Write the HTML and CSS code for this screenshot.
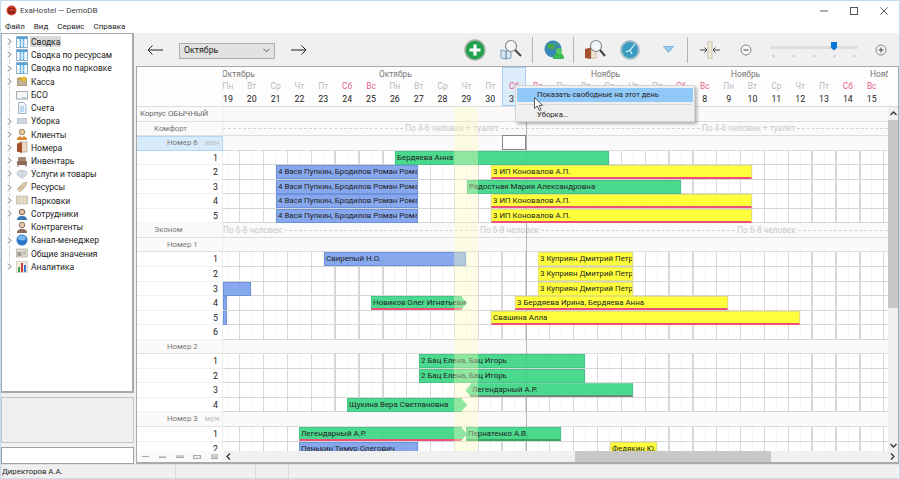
FILE: index.html
```html
<!DOCTYPE html>
<html lang="ru">
<head>
<meta charset="utf-8">
<title>ExaHostel — DemoDB</title>
<link rel="stylesheet" href="styles.css">
</head>
<body>
<svg class="defs" width="0" height="0">
  <symbol id="i-table" viewBox="0 0 12 12"><rect x=".5" y=".5" width="11" height="11" fill="#fff" stroke="#8fb0cc"/><rect x="1" y="1" width="10" height="2" fill="#4fa3d8"/><path d="M4.500 3v8M7.500 3v8" stroke="#58aee0" stroke-width="1.600"/><path d="M1 6h10M1 8.500h10" stroke="#d0e6f4" stroke-width=".7"/></symbol>
  <symbol id="i-cash" viewBox="0 0 12 12"><rect x="1" y="3" width="10" height="8" fill="#a89878"/><path d="M2 5h8M2 7h8M2 9h8" stroke="#d8ccb0"/><circle cx="8" cy="4" r="2.500" fill="#e8b830"/><circle cx="4" cy="3.500" r="1.600" fill="#cc9c28"/></symbol>
  <symbol id="i-bso" viewBox="0 0 12 12"><rect x=".5" y="2.500" width="11" height="7.500" fill="#f4f6f8" stroke="#a8aeb4"/><path d="M6 9h4" stroke="#9aa" /></symbol>
  <symbol id="i-doc" viewBox="0 0 12 12"><path d="M2.500.500h5l2.500 2.500v8.500h-7.500z" fill="#eef4fa" stroke="#9cb4c8"/><path d="M4 5h4M4 7h4M4 9h4" stroke="#8ac0e4"/></symbol>
  <symbol id="i-clean" viewBox="0 0 12 12"><rect x="1" y="3" width="10" height="6" fill="#b0bac6"/><path d="M3 3v6M5 3v6M7 3v6M9 3v6M1 5h10M1 7h10" stroke="#eef" stroke-width=".6"/></symbol>
  <symbol id="i-person" viewBox="0 0 12 12"><path d="M1 12c0-3 2-4 5-4s5 1 5 4z" fill="#d88a30"/><path d="M4.500 8l1.500 2 1.500-2z" fill="#fff"/><circle cx="6" cy="4" r="2.800" fill="#f0c8a0" stroke="#6a4a30" stroke-width=".6"/></symbol>
  <symbol id="i-person-b" viewBox="0 0 12 12"><path d="M1 12c0-3 2-4 5-4s5 1 5 4z" fill="#3878b8"/><circle cx="6" cy="4" r="2.800" fill="#e8c0a0" stroke="#403020" stroke-width=".7"/></symbol>
  <symbol id="i-person-k" viewBox="0 0 12 12"><path d="M1 12c0-3 2-4 5-4s5 1 5 4z" fill="#8a6a58"/><circle cx="6" cy="4" r="2.800" fill="#e8c8a8" stroke="#605040" stroke-width=".7"/></symbol>
  <symbol id="i-door" viewBox="0 0 12 12"><path d="M4 1h7v10h-7z" fill="#ecd8c4" stroke="#a89078" stroke-width=".6"/><path d="M1 2.500l5-1.500v11l-5-1.500z" fill="#a4502c"/></symbol>
  <symbol id="i-sofa" viewBox="0 0 12 12"><rect x="2" y="2" width="8" height="5" rx="1" fill="#a88874"/><rect x="1" y="6" width="10" height="4" rx="1" fill="#8c6c58"/><path d="M2 10v1.500M10 10v1.500" stroke="#604838"/></symbol>
  <symbol id="i-gem" viewBox="0 0 12 12"><path d="M3 2.500h6l2.500 3-5.500 5.500-5.500-5.500z" fill="#c8d2da" stroke="#a0aab4" stroke-width=".5"/><path d="M1 5.500h10M4 3l-1 2.500 3 5 3-5-1-2.500" stroke="#eef2f5" stroke-width=".5" fill="none"/></symbol>
  <symbol id="i-tag" viewBox="0 0 12 12"><path d="M1 8l6-6 4-1-1 4-6 6z" fill="#dcc8a8" stroke="#b0a088" stroke-width=".5"/><path d="M3 8l3-3M5 9l3-3" stroke="#a89878" stroke-width=".5"/></symbol>
  <symbol id="i-park" viewBox="0 0 12 12"><rect x=".5" y="2" width="11" height="8" fill="#dcd2bc" stroke="#b8ae98" stroke-width=".6"/><path d="M3 2v8M6 2v8M9 2v8" stroke="#f4f0e4" stroke-width=".6"/></symbol>
  <symbol id="i-globe" viewBox="0 0 12 12"><circle cx="6" cy="6" r="5.500" fill="#2a78c8"/><ellipse cx="6" cy="4" rx="4" ry="2.500" fill="#78b8f0"/></symbol>
  <symbol id="i-card" viewBox="0 0 12 12"><rect x=".5" y="2" width="11" height="8" fill="#e0dccf" stroke="#a8a498" stroke-width=".6"/><rect x="1.500" y="5" width="4" height="4" fill="#a09c90"/><path d="M7 5h3M7 7h3" stroke="#a09c90"/></symbol>
  <symbol id="i-chart" viewBox="0 0 12 12"><rect x=".5" y=".5" width="11" height="11" fill="#f0ece0" stroke="#c0b8a8" stroke-width=".5"/><rect x="2" y="6" width="2" height="5" fill="#38a048"/><rect x="5" y="2" width="2" height="9" fill="#d83838"/><rect x="8" y="4" width="2" height="7" fill="#3878d8"/></symbol>
  <symbol id="i-chev" viewBox="0 0 5 7"><path d="M1 .5l3 3-3 3" fill="none" stroke="#666" stroke-width="1"/></symbol>
</svg>

<header class="titlebar">
  <svg class="app-icon" viewBox="0 0 12 12"><circle cx="6" cy="6" r="5.500" fill="#d8402c"/><rect x="3" y="3.500" width="6" height="4" rx="1" fill="none" stroke="#5a1810"/><path d="M2.500 8.500h7" stroke="#5a1810"/></svg>
  <span class="app-title">ExaHostel — DemoDB</span>
  <div class="win-controls">
    <svg class="win-btn" viewBox="0 0 10 10"><path d="M0 5h10" stroke="#333"/></svg>
    <svg class="win-btn" viewBox="0 0 10 10"><rect x=".5" y=".5" width="9" height="9" fill="none" stroke="#333"/></svg>
    <svg class="win-btn" viewBox="0 0 10 10"><path d="M.5.500l9 9M9.500.500l-9 9" stroke="#333"/></svg>
  </div>
</header>
<nav class="menubar"><span>Файл</span><span>Вид</span><span>Сервис</span><span>Справка</span></nav>

<main class="main">
  <aside class="side">
    <ul class="tree">
      <li class="node"><svg class="chev"><use href="#i-chev"/></svg><svg class="ticon"><use href="#i-table"/></svg><span class="tlabel sel">Сводка</span></li>
      <li class="node"><svg class="chev"><use href="#i-chev"/></svg><svg class="ticon"><use href="#i-table"/></svg><span class="tlabel">Сводка по ресурсам</span></li>
      <li class="node"><svg class="chev"><use href="#i-chev"/></svg><svg class="ticon"><use href="#i-table"/></svg><span class="tlabel">Сводка по парковке</span></li>
      <li class="node"><svg class="chev"><use href="#i-chev"/></svg><svg class="ticon"><use href="#i-cash"/></svg><span class="tlabel">Касса</span></li>
      <li class="node"><span class="nochev"></span><svg class="ticon"><use href="#i-bso"/></svg><span class="tlabel">БСО</span></li>
      <li class="node"><span class="nochev"></span><svg class="ticon"><use href="#i-doc"/></svg><span class="tlabel">Счета</span></li>
      <li class="node"><svg class="chev"><use href="#i-chev"/></svg><svg class="ticon"><use href="#i-clean"/></svg><span class="tlabel">Уборка</span></li>
      <li class="node"><svg class="chev"><use href="#i-chev"/></svg><svg class="ticon"><use href="#i-person"/></svg><span class="tlabel">Клиенты</span></li>
      <li class="node"><svg class="chev"><use href="#i-chev"/></svg><svg class="ticon"><use href="#i-door"/></svg><span class="tlabel">Номера</span></li>
      <li class="node"><svg class="chev"><use href="#i-chev"/></svg><svg class="ticon"><use href="#i-sofa"/></svg><span class="tlabel">Инвентарь</span></li>
      <li class="node"><svg class="chev"><use href="#i-chev"/></svg><svg class="ticon"><use href="#i-gem"/></svg><span class="tlabel">Услуги и товары</span></li>
      <li class="node"><svg class="chev"><use href="#i-chev"/></svg><svg class="ticon"><use href="#i-tag"/></svg><span class="tlabel">Ресурсы</span></li>
      <li class="node"><svg class="chev"><use href="#i-chev"/></svg><svg class="ticon"><use href="#i-park"/></svg><span class="tlabel">Парковки</span></li>
      <li class="node"><svg class="chev"><use href="#i-chev"/></svg><svg class="ticon"><use href="#i-person-b"/></svg><span class="tlabel">Сотрудники</span></li>
      <li class="node"><span class="nochev"></span><svg class="ticon"><use href="#i-person-k"/></svg><span class="tlabel">Контрагенты</span></li>
      <li class="node"><svg class="chev"><use href="#i-chev"/></svg><svg class="ticon"><use href="#i-globe"/></svg><span class="tlabel">Канал-менеджер</span></li>
      <li class="node"><span class="nochev"></span><svg class="ticon"><use href="#i-card"/></svg><span class="tlabel">Общие значения</span></li>
      <li class="node"><svg class="chev"><use href="#i-chev"/></svg><svg class="ticon"><use href="#i-chart"/></svg><span class="tlabel">Аналитика</span></li>
    </ul>
    <div class="side-panel"></div>
    <div class="side-input"></div>
  </aside>

  <section class="content">
    <div class="toolbar">
      <svg class="nav-arrow first" viewBox="0 0 16 10"><path d="M16 5H1M5.500.500L1 5l4.500 4.500" fill="none" stroke="#222" stroke-width="1"/></svg>
      <div class="select"><span>Октябрь</span><svg class="select-caret" viewBox="0 0 8 5"><path d="M.5.500L4 4 7.500.500" fill="none" stroke="#444"/></svg></div>
      <svg class="nav-arrow" viewBox="0 0 16 10"><path d="M0 5h15M10.500.500L15 5l-4.500 4.500" fill="none" stroke="#222" stroke-width="1"/></svg>
      <svg class="tool add" viewBox="0 0 22 22"><circle cx="11" cy="11" r="10" fill="#1fa24c" stroke="#a8b0a8" stroke-width="1.500"/><path d="M11 5.500v11M5.500 11h11" stroke="#fff" stroke-width="3.200"/></svg>
      <svg class="tool search-book" viewBox="0 0 22 22"><path d="M1 11l5 1v8l-5-1zM6 12l5-1v8l-5 1z" fill="#d8e8f4" stroke="#6a8aa8" stroke-width=".8"/><circle cx="11" cy="7" r="5.500" fill="#f4f8fb" stroke="#8a8a8a" stroke-width="1.200"/><path d="M15 11l6 6" stroke="#444" stroke-width="2"/></svg>
      <span class="tsep sep-first"></span>
      <svg class="tool" viewBox="0 0 22 22"><circle cx="10" cy="10" r="8.500" fill="#3a88b8"/><path d="M4 6c3-3 7-1 8 1s-2 4-4 3-4 0-4-4zM12 3l4 2-2 2z" fill="#4aa848"/><path d="M10 20c0-4 2-6 6-6s5 3 5 6z" fill="#3cb850"/><circle cx="16" cy="12" r="3" fill="#56c860"/></svg>
      <span class="tsep"></span>
      <svg class="tool" viewBox="0 0 22 22"><path d="M1 10l6-1.500V20L1 19z" fill="#a4502c"/><rect x="7" y="10" width="5" height="9" fill="#f0e4d4" stroke="#a89078" stroke-width=".5"/><circle cx="12" cy="7" r="5.500" fill="#f4f8fb" fill-opacity=".85" stroke="#8a8a8a" stroke-width="1.200"/><path d="M16 11l5 6" stroke="#444" stroke-width="2"/></svg>
      <svg class="tool clock" viewBox="0 0 22 22"><circle cx="11" cy="11" r="10" fill="#a8c0cc"/><circle cx="11" cy="11" r="8" fill="#3a9cc0"/><path d="M16 5l-5 6-4 2M11 11l2 4" stroke="#e8f6fb" stroke-width="1.100" fill="none"/></svg>
      <svg class="caret" viewBox="0 0 11 7"><path d="M.5.500h10L5.500 6.500z" fill="#9ccdf0" stroke="#5a9cd0" stroke-width=".7"/></svg>
      <span class="tsep sep-last"></span>
      <svg class="fit" viewBox="0 0 20 18"><rect x="8" y="0" width="4" height="18" fill="#f0ecd0" stroke="#a8a8a8" stroke-width=".7"/><path d="M0 9h7M4.500 6.500L7 9l-2.500 2.500M20 9h-7M15.500 6.500L13 9l2.500 2.500" fill="none" stroke="#444"/></svg>
      <svg class="round minus" viewBox="0 0 12 12"><circle cx="6" cy="6" r="5" fill="#f4f4f4" stroke="#888"/><path d="M3.500 6h5" stroke="#444"/></svg>
      <div class="slider"><span class="slider-rail"></span><span class="slider-thumb"></span><span class="slider-ticks"><i></i><i></i><i></i><i></i><i></i></span></div>
      <svg class="round plus" viewBox="0 0 12 12"><circle cx="6" cy="6" r="5" fill="#f4f4f4" stroke="#888"/><path d="M3.500 6h5M6 3.500v5" stroke="#444"/></svg>
    </div>

    <div class="grid">
      <div class="head">
        <div class="head-corner"></div>
        <div class="timeline">
          <div class="today-col"></div>
          <div class="months">
            <span class="month" style="left:-1px">Октябрь</span>
            <span class="month" style="left:156px">Октябрь</span>
            <span class="month" style="left:368px">Ноябрь</span>
            <span class="month" style="left:508px">Ноябрь</span>
            <span class="month" style="left:647px">Ноябрь</span>
          </div>
          <div class="days">
            <div class="day"><span class="dn">Пн</span><b>19</b></div>
            <div class="day"><span class="dn">Вт</span><b>20</b></div>
            <div class="day"><span class="dn">Ср</span><b>21</b></div>
            <div class="day"><span class="dn">Чт</span><b>22</b></div>
            <div class="day"><span class="dn">Пт</span><b>23</b></div>
            <div class="day"><span class="dn we">Сб</span><b>24</b></div>
            <div class="day"><span class="dn we">Вс</span><b>25</b></div>
            <div class="day"><span class="dn">Пн</span><b>26</b></div>
            <div class="day"><span class="dn">Вт</span><b>27</b></div>
            <div class="day"><span class="dn">Ср</span><b>28</b></div>
            <div class="day"><span class="dn">Чт</span><b>29</b></div>
            <div class="day"><span class="dn">Пт</span><b>30</b></div>
            <div class="day"><span class="dn we">Сб</span><b>31</b></div>
            <div class="day"><span class="dn we">Вс</span><b>1</b></div>
            <div class="day"><span class="dn">Пн</span><b>2</b></div>
            <div class="day"><span class="dn">Вт</span><b>3</b></div>
            <div class="day"><span class="dn">Ср</span><b>4</b></div>
            <div class="day"><span class="dn">Чт</span><b>5</b></div>
            <div class="day"><span class="dn">Пт</span><b>6</b></div>
            <div class="day"><span class="dn we">Сб</span><b>7</b></div>
            <div class="day"><span class="dn we">Вс</span><b>8</b></div>
            <div class="day"><span class="dn">Пн</span><b>9</b></div>
            <div class="day"><span class="dn">Вт</span><b>10</b></div>
            <div class="day"><span class="dn">Ср</span><b>11</b></div>
            <div class="day"><span class="dn">Чт</span><b>12</b></div>
            <div class="day"><span class="dn">Пт</span><b>13</b></div>
            <div class="day"><span class="dn we">Сб</span><b>14</b></div>
            <div class="day"><span class="dn we">Вс</span><b>15</b></div>
          </div>
        </div>
      </div>

      <div class="middle">
        <div class="rows">
          <div class="row group"><div class="label l0">Корпус ОБЫЧНЫЙ</div><div class="gtrack"></div></div>
          <div class="row group"><div class="label l1">Комфорт</div><div class="gtrack note">
            <i class="dash d1"></i><span class="note-text">По 4-6 человек + туалет</span><i class="dash d2"></i><span class="note-text">По 4-6 человек + туалет</span><i class="dash"></i>
          </div></div>
          <div class="row group"><div class="label l2 selected">Номер 6<em>жен</em></div><div class="gtrack"><div class="cell-sel"></div></div></div>
          <div class="row"><div class="label num">1</div><div class="track"><div class="bar green" style="left:172px;width:214px">Бердяева Анна</div></div></div>
          <div class="row"><div class="label num">2</div><div class="track"><div class="bar blue" style="left:53px;width:142px">4 Вася Пупкин, Бродилов Роман Роман</div><div class="bar yellow red" style="left:268px;width:261px">3 ИП Коновалов А.П.</div></div></div>
          <div class="row"><div class="label num">3</div><div class="track"><div class="bar blue" style="left:53px;width:142px">4 Вася Пупкин, Бродилов Роман Роман</div><div class="bar green" style="left:244px;width:214px">Радостная Мария Александровна</div></div></div>
          <div class="row"><div class="label num">4</div><div class="track"><div class="bar blue" style="left:53px;width:142px">4 Вася Пупкин, Бродилов Роман Роман</div><div class="bar yellow red" style="left:268px;width:261px">3 ИП Коновалов А.П.</div></div></div>
          <div class="row"><div class="label num">5</div><div class="track"><div class="bar blue" style="left:53px;width:142px">4 Вася Пупкин, Бродилов Роман Роман</div><div class="bar yellow red" style="left:268px;width:261px">3 ИП Коновалов А.П.</div></div></div>
          <div class="row group"><div class="label l1">Эконом</div><div class="gtrack note">
            <span class="note-text">По 6-8 человек</span><i class="dash d3"></i><span class="note-text">По 6-8 человек</span><i class="dash d3"></i><span class="note-text">По 6-8 человек</span><i class="dash"></i>
          </div></div>
          <div class="row group"><div class="label l2">Номер 1</div><div class="gtrack"></div></div>
          <div class="row"><div class="label num">1</div><div class="track"><div class="bar blue" style="left:101px;width:142px">Свирепый Н.О.</div><div class="bar yellow" style="left:315px;width:95px">3 Куприян Дмитрий Петрович</div></div></div>
          <div class="row"><div class="label num">2</div><div class="track"><div class="bar yellow" style="left:315px;width:95px">3 Куприян Дмитрий Петрович</div></div></div>
          <div class="row"><div class="label num">3</div><div class="track"><div class="bar blue" style="left:0;width:28px"></div><div class="bar yellow" style="left:315px;width:95px">3 Куприян Дмитрий Петрович</div></div></div>
          <div class="row"><div class="label num">4</div><div class="track"><div class="bar blue" style="left:0;width:4px"></div><div class="bar green red arrow-r" style="left:148px;width:96px">Новиков Олег Игнатьевич</div><div class="bar yellow red" style="left:292px;width:213px">3 Бердяева Ирина, Бердяева Анна</div></div></div>
          <div class="row"><div class="label num">5</div><div class="track"><div class="bar blue" style="left:0;width:4px"></div><div class="bar yellow red" style="left:268px;width:309px">Свашина Алла</div></div></div>
          <div class="row"><div class="label num">6</div><div class="track"></div></div>
          <div class="row group"><div class="label l2">Номер 2</div><div class="gtrack"></div></div>
          <div class="row"><div class="label num">1</div><div class="track"><div class="bar green" style="left:196px;width:166px">2 Бац Елена, Бац Игорь</div></div></div>
          <div class="row"><div class="label num">2</div><div class="track"><div class="bar green" style="left:196px;width:166px">2 Бац Елена, Бац Игорь</div></div></div>
          <div class="row"><div class="label num">3</div><div class="track"><div class="bar green under-g arrow-l" style="left:243px;width:167px">Легендарный А.Р.</div></div></div>
          <div class="row"><div class="label num">4</div><div class="track"><div class="bar green arrow-r" style="left:124px;width:120px">Щукина Вера Светлановна</div></div></div>
          <div class="row group"><div class="label l2">Номер 3<em>муж</em></div><div class="gtrack"></div></div>
          <div class="row"><div class="label num">1</div><div class="track"><div class="bar green red arrow-r" style="left:76px;width:168px">Легендарный А.Р.</div><div class="bar green under-d" style="left:243px;width:95px">Пернатенко А.В.</div></div></div>
          <div class="row"><div class="label num">2</div><div class="track"><div class="bar blue" style="left:76px;width:119px">Пенькин Тимур Олегович</div><div class="bar yellow" style="left:387px;width:47px">Федякин Ю.</div></div></div>
          <div class="boundary"></div>
          <div class="highlight"></div>
        </div>
        <div class="vscroll">
          <svg class="sb-arrow" viewBox="0 0 7 5"><path d="M.5 4l3-3 3 3" fill="none" stroke="#333" stroke-width="1.300"/></svg>
          <div class="vthumb"></div>
          <svg class="sb-arrow down" viewBox="0 0 7 5"><path d="M.5 1l3 3 3-3" fill="none" stroke="#333" stroke-width="1.300"/></svg>
        </div>
      </div>

      <div class="foot">
        <div class="scales"><i class="s1"></i><i class="s2"></i><i class="s3"></i><i class="s4"></i><i class="s5"></i></div>
        <div class="hscroll">
          <svg class="sb-h" viewBox="0 0 5 7"><path d="M4 .5l-3 3 3 3" fill="none" stroke="#333" stroke-width="1.300"/></svg>
          <div class="hthumb"></div>
          <svg class="sb-h" viewBox="0 0 5 7"><path d="M1 .5l3 3-3 3" fill="none" stroke="#333" stroke-width="1.300"/></svg>
        </div>
      </div>
    </div>

    <div class="ctx">
      <div class="ctx-item on">Показать свободные на этот день</div>
      <div class="ctx-sep"></div>
      <div class="ctx-item">Уборка...</div>
      <svg class="cursor" viewBox="0 0 9 14"><path d="M.5.500v11l2.800-2.500 2 4.500 1.800-.8-2-4.300h3.500z" fill="#fff" stroke="#333" stroke-width=".8"/></svg>
    </div>
  </section>
</main>

<footer class="status"><span class="st st1">Директоров А.А.</span><span class="st st2"></span><span class="st st3"></span><span class="st"></span></footer>
</body>
</html>
```

FILE: styles.css
```css
* { box-sizing: border-box; }
html, body { margin: 0; padding: 0; }
body {
  width: 900px; height: 479px; overflow: hidden;
  display: flex; flex-direction: column;
  background: #fff;
  border: 1px solid #c4dcf0;
  font: 7.8px/1 Roboto, "Liberation Sans", Arial, sans-serif;
  color: #222;
}
.defs { position: absolute; }
.titlebar { height: 19px; display: flex; align-items: center; padding-left: 5px; flex: none; }
.app-icon { width: 11px; height: 11px; }
.app-title { margin-left: 3px; color: #444; font-size: 8px; }
.win-controls { margin-left: auto; display: flex; gap: 22px; margin-right: 11px; }
.win-btn { width: 8px; height: 8px; }
.menubar { height: 13px; display: flex; gap: 9px; align-items: center; padding-left: 4px; flex: none; color: #222; font-size: 8px; }

.main { flex: 1; display: flex; min-height: 0; background: #f0f0f0; }
.side { width: 133px; flex: none; display: flex; flex-direction: column; gap: 4px; }
.tree {
  height: 360px; margin: 0; padding: 1px 0 0 2px; list-style: none; flex: none;
  background: #fff; border: 1px solid #a8a8a8; border-width: 1px 2px 2px 1px;
  position: relative;
}
.tree::before { content: ""; position: absolute; left: 7px; top: 6px; height: 226px; border-left: 1px dotted #b0b0b0; }
.node { height: 13.24px; display: flex; align-items: center; position: relative; }
.chev { width: 5px; height: 7px; margin: 0 0 0 3px; flex: none; background: #fff; position: relative; }
.nochev { width: 8px; height: 1px; flex: none; }
.ticon { width: 12px; height: 12px; margin-left: 4px; flex: none; }
.tlabel { margin-left: 2px; padding: 2px 1px 1px 1px; color: #222; font-size: 8.5px; white-space: nowrap; }
.tlabel.sel { background: #d9d9d9; }
.side-panel { height: 47px; background: #efefef; border: 1px solid #c4c4c4; }
.side-input { height: 17px; background: #fff; border: 1px solid #a0a0a0; }

.content { flex: 1; min-width: 0; display: flex; flex-direction: column; position: relative; padding-left: 2px; }
.toolbar { height: 33px; display: flex; align-items: center; flex: none; padding-left: 11px; }
.nav-arrow { width: 16px; height: 10px; margin-left: 16px; flex: none; }
.nav-arrow.first { margin-left: 0; }
.select {
  width: 96px; height: 16px; margin: 2px 0 0 16px; padding: 0 4px;
  display: flex; align-items: center; justify-content: space-between;
  background: #e2e2e2; border: 1px solid #aeaeae; color: #222; font-size: 8.8px; flex: none;
}
.select-caret { width: 7px; height: 5px; }
.tool { width: 22px; height: 22px; flex: none; margin-left: 10px; }
.tool.add { margin-left: 157px; }
.tool.search-book { margin-left: 14px; }
.tool.clock { margin-left: 13px; }
.tsep { width: 1px; height: 26px; background: #b4b4b4; margin-left: 8px; flex: none; }
.sep-first { margin-left: 10px; }
.caret { width: 11px; height: 7px; margin-left: 22px; flex: none; }
.sep-last { margin-left: 13px; }
.fit { width: 20px; height: 18px; margin-left: 12px; flex: none; }
.round { width: 12px; height: 12px; flex: none; }
.round.minus { margin-left: 20px; }
.round.plus { margin-left: 17px; }
.slider { width: 88px; height: 20px; margin-left: 18px; position: relative; flex: none; }
.slider-rail { position: absolute; left: 0; right: 0; top: 6px; height: 3px; background: #dedede; }
.slider-thumb { position: absolute; left: 61px; top: 2px; width: 6px; height: 9px; background: #0a78d8; clip-path: polygon(0 0, 100% 0, 100% 70%, 50% 100%, 0 70%); }
.slider-ticks { position: absolute; left: 3px; right: 3px; top: 15px; display: flex; justify-content: space-between; }
.slider-ticks i { width: 1px; height: 2px; background: #aaa; }

.grid {
  flex: 1; min-height: 0; display: flex; flex-direction: column;
  background: #fff; border: 1px solid #aaa; border-width: 1px 1px 2px 1px;
}
.head { height: 40px; flex: none; display: flex; padding-right: 10px; background: #fdfdfd; border-bottom: 1px solid #ddd; }
.head-corner { width: 86px; flex: none; border-right: 1px solid #eee; }
.timeline { flex: 1; min-width: 0; position: relative; overflow: hidden; }
.today-col { position: absolute; left: 279px; width: 24px; top: 0; bottom: 0; background: #dcecfb; border: 1px solid #a8cdf0; }
.months { height: 13px; position: relative; }
.month { position: absolute; top: 3px; color: #777; font-size: 8.4px; }
.days { display: flex; margin-left: -7px; position: relative; }
.day { width: 23.85px; flex: none; display: flex; flex-direction: column; align-items: center; gap: 5px; }
.dn { color: #bbb; font-size: 8.4px; margin-top: 2px; }
.dn.we { color: #e8648c; }
.day b { font-weight: 400; color: #222; font-size: 8.8px; }

.middle { flex: 1; min-height: 0; display: flex; }
.rows { flex: 1; min-width: 0; overflow: hidden; position: relative; }
.row { height: 14.55px; display: flex; }
.label { width: 86px; flex: none; background: #fafafa; border-bottom: 1px solid #e0e0e0; border-right: 1px solid #ececec; white-space: nowrap; padding-top: 3px; }
.l0 { padding-left: 3px; color: #666; }
.l1 { padding-left: 17px; color: #777; }
.l2 { padding-left: 30px; color: #777; }
.l2 em { font-style: normal; color: #bbb; margin-left: 7px; }
.label.selected { background: #d8ebfb; border: 1px solid #b4d6f4; border-width: 1px 1px 1px 0; padding-top: 2px; }
.num { background: #fff; text-align: right; padding-right: 4px; color: #222; border-bottom: 1px solid #f2f2f2; font-size: 8.8px; }
.gtrack { flex: 1; min-width: 0; background: #fafafa; border-bottom: 1px solid #dcdcdc; position: relative; }
.cell-sel { position: absolute; left: 279px; top: -1px; width: 24px; height: 15px; background: #fff; border: 1px solid #888; }
.note { display: flex; align-items: center; gap: 2px; color: #c8c8c8; overflow: hidden; }
.note-text { flex: none; font-size: 8.4px; }
.dash { flex: 1; border-top: 1px dashed #d4d4d4; }
.dash.d1 { flex: none; width: 180px; }
.dash.d2 { flex: none; width: 199px; }
.dash.d3 { flex: none; width: 194px; }
.track {
  flex: 1; min-width: 0; position: relative;
  border-bottom: 1px solid #d6d6d6;
  background: repeating-linear-gradient(90deg,
    #d8d8d8 -7.75px, #d8d8d8 -6.45px, #fff -6.45px, #fff 4.5px,
    #f4f4f4 4.5px, #f4f4f4 5.5px, #fff 5.5px, #fff 16.1px);
  background-color: #fff;
}
.bar {
  position: absolute; z-index: 1; top: 0; height: 14px; padding: 2px 0 0 1px; overflow: hidden; white-space: nowrap;
  color: #222; font-size: 7.9px; border: 1px solid transparent;
}
.green { background: rgba(60, 214, 132, .92); border-color: #44c486; }
.blue { background: rgba(118, 156, 234, .88); border-color: #6c92dc; }
.yellow { background: rgba(255, 255, 50, .95); border-color: #e4e070; }
.red { border-bottom: 2px solid #ee4f78; }
.under-g { border-bottom: 2px solid #6e8a78; }
.under-d { border-bottom: 2px solid #30a858; }
.arrow-r { clip-path: polygon(0 0, calc(100% - 6px) 0, 100% 50%, calc(100% - 6px) 100%, 0 100%); }
.arrow-l { padding-left: 5px; clip-path: polygon(5px 0, 100% 0, 100% 100%, 5px 100%, 0 50%); }
.boundary { position: absolute; z-index: 0; left: 389px; top: 0; bottom: 0; width: 1px; background: #b4b4b4; }
.highlight { position: absolute; z-index: 2; left: 317px; width: 24px; top: 0; bottom: 0; background: rgba(252, 252, 190, .38); }

.vscroll { width: 10px; flex: none; background: #f0f0f0; display: flex; flex-direction: column; align-items: center; padding-top: 4px; }
.sb-arrow { width: 7px; height: 5px; flex: none; }
.vthumb { width: 100%; height: 188px; margin-top: 4px; background: #c8c8c8; }
.sb-arrow.down { margin-top: auto; margin-bottom: 3px; }
.foot { height: 11px; flex: none; display: flex; }
.scales { width: 86px; flex: none; display: flex; align-items: center; justify-content: space-between; padding: 0 5px; background: #fafafa; }
.scales i { display: block; background: #ccc; border: 1px solid #aaa; border-width: 0 0 1px; }
.s1 { width: 7px; height: 1px; }
.s2 { width: 7px; height: 2px; }
.s3 { width: 8px; height: 3px; }
.s4 { width: 8px; height: 4px; background: #eee !important; border: 1px solid #aaa !important; }
.s5 { width: 7px; height: 5px; }
.hscroll { flex: 1; display: flex; align-items: center; justify-content: space-between; background: #f0f0f0; padding: 0 3px; position: relative; }
.sb-h { width: 5px; height: 7px; }
.hthumb { position: absolute; left: 352px; width: 196px; top: 0; bottom: 0; background: #c8c8c8; }

.ctx {
  position: absolute; z-index: 5; left: 381px; top: 52px; width: 180px; height: 37px;
  padding: 2px 1px; background: #efefef; border: 1px solid #d4d4d4;
  box-shadow: 2px 2px 3px rgba(0, 0, 0, .3); font-size: 7.6px;
}
.ctx-item { height: 14px; padding: 3px 0 0 20px; color: #222; }
.ctx-item.on { background: #90c8f8; }
.ctx-sep { height: 1px; margin: 2px 1px 3px; background: #d8d8d8; }
.cursor { position: absolute; left: 18px; top: 11px; width: 9px; height: 14px; }

.status { height: 14px; flex: none; display: flex; background: #f0f0f0; border-top: 1px solid #e0e0e0; }
.st { padding: 3px 0 0 1px; color: #222; border-right: 1px solid #dcdcdc; }
.st1 { width: 175px; }
.st2 { width: 80px; }
.st3 { width: 33px; }
.st:last-child { flex: 1; border-right: 0; }
```
